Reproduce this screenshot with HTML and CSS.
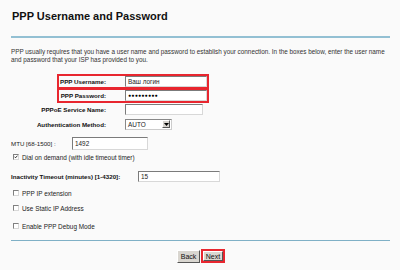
FILE: index.html
```html
<!DOCTYPE html>
<html>
<head>
<meta charset="utf-8">
<link rel="stylesheet" href="styles.css">
</head>
<body>
<div class="page">
  <h1 class="title">PPP Username and Password</h1>
  <div class="rule top"></div>
  <p class="intro">PPP usually requires that you have a user name and password to establish your connection. In the boxes below, enter the user name and password that your ISP has provided to you.</p>

  <div class="creds">
    <div class="row boxed">
      <div class="label">PPP Username:</div>
      <div class="field wide">Ваш логин</div>
    </div>
    <div class="row boxed">
      <div class="label">PPP Password:</div>
      <div class="field wide dots">●●●●●●●●●</div>
    </div>
    <div class="row plain">
      <div class="label">PPPoE Service Name:</div>
      <div class="field narrow"></div>
    </div>
    <div class="row plain auth">
      <div class="label">Authentication Method:</div>
      <div class="select"><span class="sel-text">AUTO</span><span class="sel-btn"><svg width="5" height="3" viewBox="0 0 5 3"><path d="M0 0H5L2.5 3Z" fill="#000"/></svg></span></div>
    </div>
  </div>

  <div class="mtu">
    <span class="mtu-label">MTU [68-1500] :</span>
    <div class="field mtu-field">1492</div>
  </div>

  <div class="check first"><span class="box checked"><svg width="6" height="6" viewBox="0 0 6 6"><path d="M0.8 2.6L2.3 4.2L5.2 1" fill="none" stroke="#000" stroke-width="1.2"/></svg></span><span>Dial on demand (with idle timeout timer)</span></div>

  <div class="idle">
    <span class="idle-label">Inactivity Timeout (minutes) [1-4320]:</span>
    <div class="field idle-field">15</div>
  </div>

  <div class="check c1"><span class="box"></span><span>PPP IP extension</span></div>
  <div class="check c2"><span class="box"></span><span>Use Static IP Address</span></div>
  <div class="check c3"><span class="box"></span><span>Enable PPP Debug Mode</span></div>

  <div class="rule bottom"></div>

  <div class="buttons">
    <span class="btn back">Back</span>
    <span class="next-wrap"><span class="btn next">Next</span></span>
  </div>
</div>
</body>
</html>
```
FILE: styles.css
```css
html, body {
  margin: 0;
  padding: 0;
  background: #fafafa;
}
body {
  font-family: "Liberation Sans", Arial, sans-serif;
  color: #222;
  width: 400px;
  height: 270px;
  overflow: hidden;
}
.page {
  padding: 0 10px 0 11px;
  display: flex;
  flex-direction: column;
}
.title {
  margin: 10px 0 0 1px;
  font-size: 11px;
  line-height: 13px;
  font-weight: bold;
  color: #111;
}
.rule {
  height: 2px;
  width: 379px;
}
.rule.top {
  margin-top: 13px;
  background: #93c0d3;
}
.rule.bottom {
  margin-top: 10px;
  background: #7fb0c6;
  height: 1px;
}
.intro {
  margin: 10px 0 0 0;
  font-size: 6.35px;
  line-height: 7.5px;
  color: #333;
  width: 376px;
}
.creds {
  margin-top: 11px;
  display: flex;
  flex-direction: column;
}
.row {
  display: flex;
  align-items: center;
  margin-left: 46px;
  width: 152px;
  box-sizing: border-box;
  border: 2px solid transparent;
}
.row.boxed {
  border-color: #e8262f;
  height: 15px;
}
.row.boxed + .row.boxed {
  margin-top: -1px;
}
.row.plain {
  height: 12px;
  border-width: 0 2px;
}
.row.auth {
  margin-top: 3px;
}
.label {
  width: 47px;
  flex: none;
  display: flex;
  justify-content: flex-end;
  white-space: nowrap;
  font-size: 6.2px;
  font-weight: bold;
  color: #111;
  margin-right: 19px;
}
.field {
  box-sizing: border-box;
  height: 11px;
  background: #fff;
  border-top: 1px solid #7b7b7b;
  border-left: 1px solid #7b7b7b;
  border-right: 1px solid #d8d8d8;
  border-bottom: 1px solid #d8d8d8;
  font-size: 6.4px;
  line-height: 9px;
  padding-left: 2px;
  color: #222;
}
.field.wide {
  width: 82px;
}
.field.narrow {
  width: 78px;
}
.dots {
  font-size: 5px;
  letter-spacing: 0.3px;
  color: #000;
}
.select {
  box-sizing: border-box;
  width: 47px;
  height: 11px;
  background: #fff;
  border: 1px solid #888;
  border-right-color: #ccc;
  border-bottom-color: #ccc;
  display: flex;
  align-items: center;
  justify-content: space-between;
  font-size: 6.4px;
  padding-left: 2px;
}
.sel-btn {
  width: 8px;
  height: 8px;
  box-sizing: border-box;
  background: #d6d3ce;
  border: 1px solid #fff;
  border-right-color: #555;
  border-bottom-color: #555;
  display: flex;
  align-items: center;
  justify-content: center;
  margin-right: 1px;
}
.mtu {
  display: flex;
  align-items: center;
  margin-top: 7px;
  font-size: 6.2px;
  color: #222;
}
.mtu-label {
  width: 61px;
  white-space: nowrap;
}
.mtu-field {
  width: 76px;
  height: 13px;
  line-height: 11px;
}
.check {
  display: flex;
  align-items: center;
  font-size: 6.4px;
  color: #222;
  margin-left: 2px;
  height: 8px;
}
.check .box {
  box-sizing: border-box;
  width: 6px;
  height: 6px;
  background: #fff;
  border: 1px solid #808080;
  border-right-color: #d8d8d8;
  border-bottom-color: #d8d8d8;
  margin-right: 3px;
  display: flex;
  align-items: center;
  justify-content: center;
  flex: none;
}
.check .box.checked svg {
  display: block;
}
.check.first {
  margin-top: 3px;
}
.idle {
  display: flex;
  align-items: center;
  margin-top: 10px;
}
.idle-label {
  width: 127px;
  font-size: 6.2px;
  font-weight: bold;
  color: #111;
  white-space: nowrap;
}
.idle-field {
  width: 82px;
  height: 11px;
}
.check.c1 {
  margin-top: 7px;
}
.check.c2 {
  margin-top: 7px;
}
.check.c3 {
  margin-top: 10px;
}
.buttons {
  display: flex;
  align-items: center;
  margin-top: 8px;
  margin-left: 166px;
}
.btn {
  box-sizing: border-box;
  height: 13px;
  display: flex;
  align-items: center;
  justify-content: center;
  font-size: 7px;
  color: #111;
  background: #d9d6d0;
  border: 1px solid #fff;
  border-right-color: #555;
  border-bottom-color: #555;
}
.back {
  width: 23px;
}
.next-wrap {
  margin-left: 1px;
  border: 2px solid #e8262f;
  box-sizing: border-box;
  height: 14px;
  display: flex;
  align-items: center;
}
.next {
  width: 20px;
  height: 10px;
}
```
